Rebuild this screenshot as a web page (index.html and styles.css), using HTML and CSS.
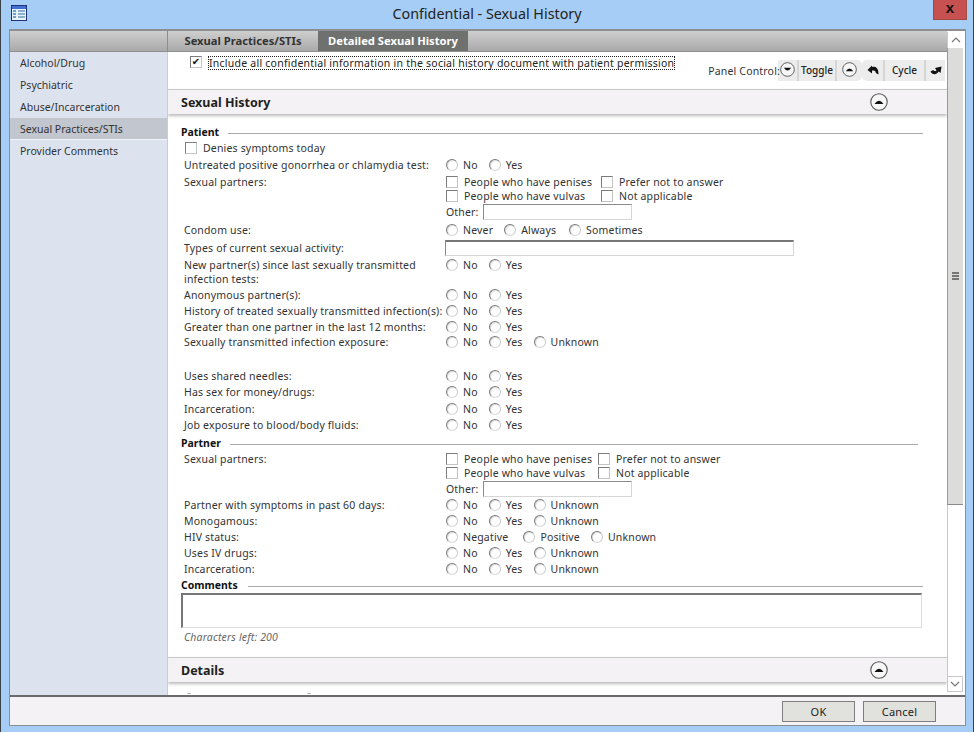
FILE: index.html
```html
<!DOCTYPE html>
<html>
  <head>
    <meta charset="utf-8">
    <title>Confidential - Sexual History</title>
    <link rel="stylesheet" href="styles.css">
  </head>
  <body>
    <svg class="defs" width="0" height="0">
      <symbol id="circle-up" viewBox="0 0 18 18">
        <circle cx="9" cy="9" r="8.2" fill="#f7f7f7" stroke="#555" stroke-width="1.1"/>
        <path d="M4.5 11 Q9 4.5 13.5 11 Z" fill="#111"/>
      </symbol>
      <symbol id="circle-down" viewBox="0 0 18 18">
        <circle cx="9" cy="9" r="8.2" fill="#f7f7f7" stroke="#555" stroke-width="1.1"/>
        <path d="M4.5 7 Q9 13.5 13.5 7 Z" fill="#111"/>
      </symbol>
      <symbol id="undo" viewBox="0 0 12 12">
        <path d="M0.5 6 L5 1.5 V3 C8.5 1.8 11.8 4 11.5 10.5 L8.8 9 C9 7 7.5 6 5 6.6 V9.5 Z" fill="#111"/>
      </symbol>
      <symbol id="redo" viewBox="0 0 12 12">
        <path d="M0.5 7.5 L3.2 6 C4 7.4 5.5 7.2 6.5 6.4 L5 4 L11.5 2.5 L10.5 9 L8.8 7.6 C6.5 11 2.2 11 0.5 7.5 Z" fill="#111"/>
      </symbol>
    </svg>

    <div id="window">
      <div class="titlebar">
        <svg class="appicon" width="16" height="16" viewBox="0 0 16 16">
          <rect x="0.5" y="0.5" width="15" height="15" fill="#e8f2fb" stroke="#1f2f7a"/>
          <rect x="1" y="1" width="14" height="3" fill="#3f6fd0"/>
          <path d="M2 6h3M2 9h3M2 12h3" stroke="#6fa0c8" stroke-width="2"/>
          <path d="M7 6h7M7 9h7M7 12h7" stroke="#8ab0d0" stroke-width="2"/>
        </svg>
        <div class="title">Confidential - Sexual History</div>
        <div class="closebox"><div class="close">x</div></div>
      </div>

      <div id="dialog">
        <div class="frame">
          <div class="panes">
            <div class="topbar">
              <div class="topbar-side"></div>
              <div class="tab">Sexual Practices/STIs</div>
              <div class="tab active">Detailed Sexual History</div>
            </div>
            <div class="split">
              <div class="nav">
                <div class="navitem">Alcohol/Drug</div>
                <div class="navitem">Psychiatric</div>
                <div class="navitem">Abuse/Incarceration</div>
                <div class="navitem selected">Sexual Practices/STIs</div>
                <div class="navitem">Provider Comments</div>
              </div>

              <div class="content">
                <div class="toolbar">
                  <label class="include">
                    <input type="checkbox" checked>
                    <span class="focus">Include all confidential information in the social history document with patient permission</span>
                  </label>
                  <div class="panelcontrol">
                    <span class="pc-label">Panel Control:</span>
                    <div class="pc-group">
                      <span class="pc-btn pc-ic1"><svg width="15" height="15"><use href="#circle-down"/></svg></span>
                      <span class="pc-btn pc-toggle">Toggle</span>
                      <span class="pc-btn pc-ic2"><svg width="15" height="15"><use href="#circle-up"/></svg></span>
                      <span class="pc-btn pc-ic3"><svg width="12" height="12"><use href="#undo"/></svg></span>
                      <span class="pc-btn pc-cycle">Cycle</span>
                      <span class="pc-btn pc-ic4"><svg width="12" height="12"><use href="#redo"/></svg></span>
                    </div>
                  </div>
                </div>

                <div class="sectionhead">
                  <span>Sexual History</span>
                  <svg width="18" height="18"><use href="#circle-up"/></svg>
                </div>

                <div class="form">
                  <div class="legend legend-patient"><b>Patient</b></div>
                  <label class="row-check"><input type="checkbox">Denies symptoms today</label>

                  <div class="row mt1"><div class="lbl">Untreated positive gonorrhea or chlamydia test:</div><div class="opts"><label><input type="radio">No</label><label><input type="radio">Yes</label></div></div>

                  <div class="row mt1 partners">
                    <div class="lbl">Sexual partners:</div>
                    <div class="checks">
                      <label><input type="checkbox">People who have penises</label><label><input type="checkbox">Prefer not to answer</label>
                      <label><input type="checkbox">People who have vulvas</label><label><input type="checkbox">Not applicable</label>
                    </div>
                    <div class="other">Other:<input type="text"></div>
                  </div>

                  <div class="row mt2"><div class="lbl">Condom use:</div><div class="opts"><label class="w-never"><input type="radio">Never</label><label class="w-always"><input type="radio">Always</label><label><input type="radio">Sometimes</label></div></div>
                  <div class="row mt2"><div class="lbl">Types of current sexual activity:</div><input class="wide" type="text"></div>
                  <div class="row mt1 tworow"><div class="lbl lbl-wrap">New partner(s) since last sexually transmitted infection tests:</div><div class="opts"><label><input type="radio">No</label><label><input type="radio">Yes</label></div></div>
                  <div class="row"><div class="lbl">Anonymous partner(s):</div><div class="opts"><label><input type="radio">No</label><label><input type="radio">Yes</label></div></div>
                  <div class="row"><div class="lbl">History of treated sexually transmitted infection(s):</div><div class="opts"><label><input type="radio">No</label><label><input type="radio">Yes</label></div></div>
                  <div class="row"><div class="lbl">Greater than one partner in the last 12 months:</div><div class="opts"><label><input type="radio">No</label><label><input type="radio">Yes</label></div></div>
                  <div class="row tight"><div class="lbl">Sexually transmitted infection exposure:</div><div class="opts"><label><input type="radio">No</label><label><input type="radio">Yes</label><label><input type="radio">Unknown</label></div></div>

                  <div class="row mt18"><div class="lbl">Uses shared needles:</div><div class="opts"><label><input type="radio">No</label><label><input type="radio">Yes</label></div></div>
                  <div class="row"><div class="lbl">Has sex for money/drugs:</div><div class="opts"><label><input type="radio">No</label><label><input type="radio">Yes</label></div></div>
                  <div class="row mt1"><div class="lbl">Incarceration:</div><div class="opts"><label><input type="radio">No</label><label><input type="radio">Yes</label></div></div>
                  <div class="row"><div class="lbl">Job exposure to blood/body fluids:</div><div class="opts"><label><input type="radio">No</label><label><input type="radio">Yes</label></div></div>

                  <div class="legend legend-partner"><b>Partner</b></div>
                  <div class="row partners">
                    <div class="lbl">Sexual partners:</div>
                    <div class="checks checks-partner">
                      <label><input type="checkbox">People who have penises</label><label><input type="checkbox">Prefer not to answer</label>
                      <label><input type="checkbox">People who have vulvas</label><label><input type="checkbox">Not applicable</label>
                    </div>
                    <div class="other">Other:<input type="text"></div>
                  </div>
                  <div class="row"><div class="lbl">Partner with symptoms in past 60 days:</div><div class="opts"><label><input type="radio">No</label><label><input type="radio">Yes</label><label><input type="radio">Unknown</label></div></div>
                  <div class="row"><div class="lbl">Monogamous:</div><div class="opts"><label><input type="radio">No</label><label><input type="radio">Yes</label><label><input type="radio">Unknown</label></div></div>
                  <div class="row"><div class="lbl">HIV status:</div><div class="opts"><label class="w-neg"><input type="radio">Negative</label><label class="w-pos"><input type="radio">Positive</label><label><input type="radio">Unknown</label></div></div>
                  <div class="row"><div class="lbl">Uses IV drugs:</div><div class="opts"><label><input type="radio">No</label><label><input type="radio">Yes</label><label><input type="radio">Unknown</label></div></div>
                  <div class="row"><div class="lbl">Incarceration:</div><div class="opts"><label><input type="radio">No</label><label><input type="radio">Yes</label><label><input type="radio">Unknown</label></div></div>

                  <div class="legend legend-comments"><b>Comments</b></div>
                  <textarea class="comments"></textarea>
                  <div class="charsleft">Characters left: 200</div>
                </div>

                <div class="sectionhead details">
                  <span>Details</span>
                  <svg width="18" height="18"><use href="#circle-up"/></svg>
                </div>
                <div class="peek"><i></i><i></i></div>
              </div>
            </div>
          </div>

          <div class="scrollbar">
            <div class="sb-btn"><svg width="10" height="6"><path d="M1 5 L5 1 L9 5" fill="none" stroke="#777" stroke-width="1.2"/></svg></div>
            <div class="sb-thumb"><span></span><span></span><span></span></div>
            <div class="sb-track"></div>
            <div class="sb-btn sb-last"><svg width="10" height="6"><path d="M1 1 L5 5 L9 1" fill="none" stroke="#777" stroke-width="1.2"/></svg></div>
          </div>
        </div>

        <div class="footer">
          <button>OK</button>
          <button>Cancel</button>
        </div>
      </div>
    </div>
  </body>
</html>
```

FILE: styles.css
```css
* {
    box-sizing: border-box;
}
html, body {
    margin: 0;
    padding: 0;
    overflow: hidden;
}
body {
    font-family: "Noto Sans", sans-serif;
    font-size: 10.5px;
    letter-spacing: .17px;
    color: #333;
}
.defs {
    display: block;
    height: 0;
}
#window {
    width: 974px;
    height: 732px;
    background: #a5cdf5;
    border-left: 1px solid #3a4048;
    border-right: 1px solid #3a4048;
    padding: 0 7px 6px 8px;
    display: flex;
    flex-direction: column;
}
.titlebar {
    height: 29px;
    display: grid;
    grid-template-columns: 1fr auto 1fr;
    margin-left: -8px;
    margin-right: -7px;
}
.appicon {
    margin: 5px 0 0 10px;
}
.title {
    font-size: 14.3px;
    letter-spacing: 0;
    line-height: 28px;
    color: #222;
}
.closebox {
    display: flex;
    justify-content: flex-end;
}
.close {
    width: 34px;
    height: 20px;
    margin-right: 6px;
    background: #c75050;
    border: 1px solid #a04a42;
    border-top: 0;
    color: #111;
    font: bold 15px/16px "Liberation Sans", sans-serif;
    text-align: center;
}
#dialog {
    flex: 1;
    display: flex;
    flex-direction: column;
    background: #fff;
    border: 1px solid #8b8f94;
    border-top-width: 2px;
    min-height: 0;
}
.frame {
    flex: 1;
    display: flex;
    min-height: 0;
    height: 665px;
}
.panes {
    width: 937px;
    display: flex;
    flex-direction: column;
}
.topbar {
    display: flex;
    height: 21px;
    background: linear-gradient(#cfcfcf, #a9a9a9);
    border-bottom: 1px solid #8f8f8f;
}
.topbar-side {
    width: 158px;
    border-right: 1px solid #8d8d8d;
}
.tab {
    width: 150px;
    font-family: "Noto Sans", sans-serif;
    font-weight: bold;
    font-size: 11.2px;
    letter-spacing: 0;
    line-height: 20px;
    text-align: center;
    color: #333;
}
.tab.active {
    background: #6f716f;
    color: #fff;
}
.split {
    flex: 1;
    display: flex;
    min-height: 0;
}
.nav {
    width: 158px;
    background: #dce3ef;
    border-right: 1px solid #c9ccd2;
}
.navitem {
    height: 22px;
    line-height: 22px;
    padding-left: 10px;
    letter-spacing: 0;
    color: #333;
}
.navitem.selected {
    background: #c2c6cf;
    border-bottom: 1px solid #f0f3f8;
}
.content {
    flex: 1;
    overflow: hidden;
    background: #fff;
}
.toolbar {
    height: 37px;
    display: flex;
    justify-content: space-between;
}
.include {
    display: flex;
    align-items: flex-start;
    padding: 4px 0 0 22px;
    color: #222;
}
.include input {
    margin: 0 5px 0 0;
}
.focus {
    width: 467px;
    height: 14px;
    line-height: 12px;
    letter-spacing: .24px;
    border: 1px dotted #222;
    white-space: nowrap;
}
.panelcontrol {
    display: flex;
    align-items: flex-start;
    padding: 8px 2px 0 0;
}
.pc-label {
    position: relative;
    z-index: 1;
    line-height: 22px;
    margin-right: -2px;
}
.pc-group {
    display: flex;
    height: 21px;
    width: 167px;
}
.pc-btn {
    display: flex;
    align-items: center;
    justify-content: center;
    padding-bottom: 2px;
    background: #ececec;
    border-right: 2px solid #d8d5d5;
    font-family: "Noto Sans", sans-serif;
    font-size: 10px;
    font-weight: 500;
    letter-spacing: 0;
    color: #222;
}
.pc-ic1 { width: 21px; }
.pc-toggle { width: 38px; }
.pc-ic2 { width: 25px; border-right: 0; border-radius: 0 5px 5px 0; }
.pc-ic3 { width: 23px; border-radius: 5px 0 0 5px; }
.pc-cycle { width: 41px; }
.pc-ic4 { width: 19px; border-right: 0; }
.sectionhead {
    height: 25px;
    background: #f5f2f5;
    border-top: 1px solid #c8c8c8;
    box-shadow: 0 2px 3px #bdbdbd;
    display: flex;
    align-items: center;
    justify-content: space-between;
    padding: 0 59px 0 13px;
    font-family: "Noto Sans", sans-serif;
    font-size: 12.5px;
    font-weight: bold;
    letter-spacing: 0;
    color: #222;
}
.form {
    padding: 10px 24px 0 13px;
    height: 543px;
}
.legend {
    height: 16px;
    display: flex;
    align-items: center;
    gap: 9px;
    letter-spacing: 0;
    font-size: 10.5px;
}
.legend b {
    color: #111;
}
.legend::after {
    content: "";
    flex: 1;
    height: 1px;
    background: #aaa;
    margin-top: 2px;
}
.legend-partner {
    margin-top: 2px;
    margin-right: 5px;
}
.legend-comments::after {
    margin-left: 1px;
}
.row-check {
    display: flex;
    align-items: center;
    height: 16px;
    padding-left: 4px;
}
.row-check input {
    margin: 0 6px 0 0;
}
.row {
    display: grid;
    grid-template-columns: 262px 1fr;
    min-height: 16px;
    padding-left: 3px;
    line-height: 16px;
}
.mt1 { margin-top: 1px; }
.mt2 { margin-top: 2px; }
.mt18 { margin-top: 18px; }
.tight { margin-top: -1px; }
.lbl {
    white-space: nowrap;
    line-height: 14px;
    padding-top: 1px;
}
.lbl-wrap {
    white-space: normal;
    padding-right: 22px;
}
.tworow {
    height: 30px;
}
.opts {
    display: flex;
    gap: 11px;
    align-items: flex-start;
}
.opts label, .checks label {
    display: flex;
    align-items: center;
    height: 16px;
}
.w-always { margin-right: 2px; }
.w-neg { margin-right: 4px; }
input[type=radio], input[type=checkbox] {
    appearance: none;
    -webkit-appearance: none;
    width: 12px;
    height: 12px;
    margin: 0 6px 0 0;
    background: #fff;
    border: 1px solid;
    flex: none;
    position: relative;
}
input[type=radio] {
    margin-right: 5px;
    border-radius: 50%;
    border-color: #7a7a7a #c9c9c9 #d8d8d8 #7a7a7a;
    box-shadow: inset 1px 1px 1px #ddd;
}
input[type=checkbox] {
    border-color: #7c7c7c #c4c4c4 #c4c4c4 #7c7c7c;
}
input[type=checkbox]:checked::after {
    content: "✔";
    display: block;
    font: bold 10px/10px "DejaVu Sans", sans-serif;
    color: #111;
    text-align: center;
}
.partners {
    grid-template-rows: auto auto;
}
.checks {
    display: grid;
    grid-template-columns: 155px auto;
    grid-auto-rows: 14px;
    align-items: center;
    padding-top: 1px;
}
.checks label {
    height: 14px;
}
.checks-partner {
    grid-template-columns: 152px auto;
}
.other {
    grid-column: 2;
    display: flex;
    align-items: center;
    height: 16px;
    margin-top: 1px;
    gap: 4px;
}
.other input {
    width: 149px;
    height: 16px;
}
input[type=text], textarea {
    display: block;
    background: #fff;
    border: 1px solid;
    border-color: #8a8a8a #d6d6d6 #d6d6d6 #8a8a8a;
    margin: 0;
    padding: 0;
    border-radius: 0;
    outline: 0;
}
.wide {
    width: 349px;
    height: 16px;
    margin-left: -1px !important;
    border-top: 2px solid #777 !important;
}
.comments {
    width: 741px;
    height: 35px;
    resize: none;
    border-width: 2px 1px 1px 2px;
    border-color: #777 #ddd #ddd #777;
}
.charsleft {
    padding-left: 3px;
    margin-top: 1px;
    line-height: 16px;
    font-style: italic;
    color: #666;
}
.peek {
    display: flex;
    gap: 116px;
    padding: 11px 0 0 19px;
}
.peek i {
    display: block;
    width: 4px;
    height: 1px;
    background: #bbb;
}
.scrollbar {
    width: 17px;
    display: flex;
    flex-direction: column;
    padding: 1px 1px 0 0;
    background: #fff;
}
.sb-btn {
    height: 16px;
    background: #fff;
    border-left: 1px solid #c8c8c8;
    display: flex;
    align-items: center;
    justify-content: center;
    flex: none;
}
.sb-last {
    border: 1px solid #c8c8c8;
    margin-bottom: 3px;
}
.sb-thumb {
    height: 457px;
    flex: none;
    background: #dcdddb;
    border-left: 1px solid #9a9a9a;
    border-bottom: 1px solid #8a8a8a;
    display: flex;
    flex-direction: column;
    align-items: center;
    justify-content: center;
    gap: 1px;
}
.sb-thumb span {
    width: 7px;
    height: 2px;
    background: #777;
}
.sb-track {
    flex: 1;
    border-left: 1px solid #c8c8c8;
}
.footer {
    height: 30px;
    flex: none;
    background: #f5f2f5;
    border-top: 2px solid #6a6a6a;
    display: flex;
    justify-content: flex-end;
    gap: 8px;
    padding: 4px 29px 0 0;
}
.footer button {
    width: 73px;
    height: 21px;
    background: #e1e1dd;
    border: 1px solid #7e7e7e;
    border-radius: 0;
    font-family: "Noto Sans", sans-serif;
    font-size: 11px;
    letter-spacing: .2px;
    color: #222;
    padding: 0;
}
```
